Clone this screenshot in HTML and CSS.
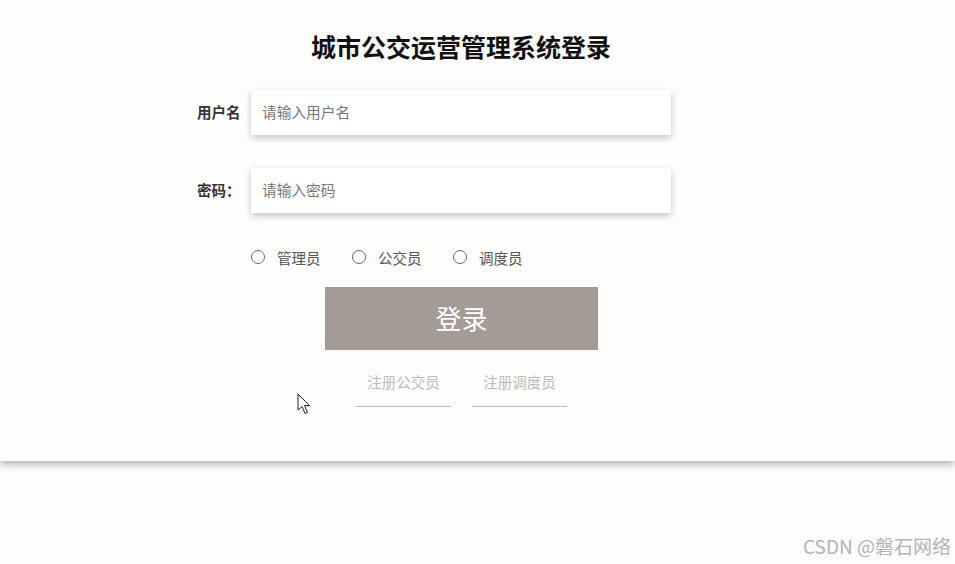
FILE: index.html
```html
<!DOCTYPE html>
<html lang="zh-CN">
<head>
<meta charset="utf-8">
<title>城市公交运营管理系统登录</title>
<link rel="stylesheet" href="styles.css">
</head>
<body>
<div class="panel">
  <div class="wrap">
    <h1 class="title">城市公交运营管理系统登录</h1>
    <form class="form">
      <div class="row">
        <label class="label">用户名</label>
        <input class="input" type="text" placeholder="请输入用户名">
      </div>
      <div class="row row-second">
        <label class="label">密码：</label>
        <input class="input" type="password" placeholder="请输入密码">
      </div>
      <div class="roles">
        <label class="role"><span class="circle"></span><span>管理员</span></label>
        <label class="role"><span class="circle"></span><span>公交员</span></label>
        <label class="role"><span class="circle"></span><span>调度员</span></label>
      </div>
      <button class="btn" type="button">登录</button>
      <div class="links">
        <a class="link">注册公交员</a>
        <a class="link">注册调度员</a>
      </div>
    </form>
  </div>
</div>
<svg class="cursor" width="14" height="22" viewBox="0 0 14 22">
  <path d="M1 1 L1 17 L5 13.5 L8 20.5 L10.5 19.5 L7.5 12.5 L12.5 12.5 Z" fill="#fff" stroke="#222" stroke-width="1" stroke-linejoin="round"/>
</svg>
<div class="watermark">CSDN @磐石网络</div>
</body>
</html>
```
FILE: styles.css
```css
* { box-sizing: border-box; }
body {
  margin: 0;
  background: #fdfdfc;
  font-family: "Noto Sans CJK SC", "Liberation Sans", sans-serif;
  height: 564px;
  overflow: hidden;
}
.panel {
  height: 461px;
  background: #fdfdfc;
  box-shadow: 0 3px 8px rgba(0, 0, 0, 0.32);
  position: relative;
}
.wrap {
  width: 922px;
  padding-top: 31px;
}
.title {
  margin: 0;
  text-align: center;
  font-size: 25px;
  line-height: 30px;
  font-weight: 700;
  color: #111;
}
.form {
  margin: 29px 0 0 197px;
  width: 480px;
}
.row {
  display: flex;
  align-items: center;
  height: 45px;
}
.row-second { margin-top: 33px; }
.label {
  width: 54px;
  font-size: 14.5px;
  font-weight: 700;
  color: #333;
  padding-bottom: 3px;
}
.input {
  width: 420px;
  height: 45px;
  border: none;
  outline: none;
  background: #fff;
  box-shadow: 0 3px 7px rgba(0, 0, 0, 0.22);
  padding: 0 11px 3px;
  font-family: inherit;
  font-size: 14.7px;
  color: #333;
}
.input::placeholder { color: #777; }
.roles {
  display: flex;
  align-items: center;
  height: 20px;
  margin: 34px 0 0 54px;
}
.role {
  display: flex;
  align-items: center;
  width: 101px;
  font-size: 14.5px;
  color: #555;
}
.circle {
  width: 14px;
  height: 14px;
  border: 1px solid #666;
  border-radius: 50%;
  margin-right: 12px;
  background: #fff;
}
.btn {
  display: block;
  margin: 20px 0 0 128px;
  width: 273px;
  height: 63px;
  border: none;
  background: #a49b95;
  color: #fff;
  font-family: inherit;
  font-size: 26px;
  padding: 0 0 2px;
}
.links {
  display: flex;
  gap: 21px;
  margin: 22px 0 0 159px;
}
.link {
  width: 95px;
  text-align: center;
  font-size: 14.5px;
  line-height: 20px;
  padding-bottom: 14px;
  color: #bbb;
  border-bottom: 1px solid #bbb;
}
.cursor {
  position: absolute;
  left: 297px;
  top: 393px;
}
.watermark {
  position: absolute;
  right: 4px;
  top: 533px;
  font-size: 19px;
  line-height: 26px;
  color: #b3b3b3;
}
```
